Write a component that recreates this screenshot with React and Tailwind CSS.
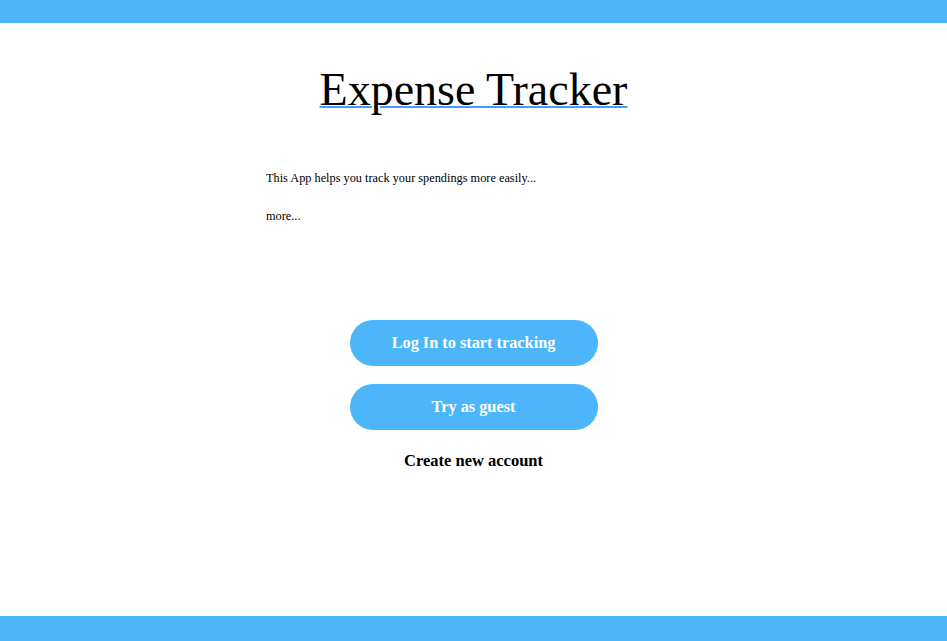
export default function App() {
  return (
    <div className="min-h-screen flex flex-col bg-white" style={{ fontFamily: '"Liberation Serif", "DejaVu Serif", serif' }}>
      <div className="h-[23px] bg-[#4db6fb]" />
      <main className="flex-1 flex flex-col items-center">
        <h1 className="mt-[44px] text-[46px] leading-[46px] text-black underline decoration-[#4a9cf0] decoration-2 underline-offset-[1px]">Expense Tracker</h1>
        <div className="w-[415px] mt-[57px] text-[12.3px] text-black">
          <p className="leading-[16px]">This App helps you track your spendings more easily...</p>
          <p className="leading-[16px] mt-[22px]">more...</p>
        </div>
        <button className="mt-[96px] w-[248px] h-[46px] rounded-full bg-[#4db6fb] text-white text-[16.3px] font-bold">Log In to start tracking</button>
        <button className="mt-[18px] w-[248px] h-[46px] rounded-full bg-[#4db6fb] text-white text-[16.3px] font-bold">Try as guest</button>
        <a className="mt-[19px] text-[16.5px] font-bold text-black">Create new account</a>
      </main>
      <div className="h-[25px] bg-[#4db6fb]" />
    </div>
  );
}
